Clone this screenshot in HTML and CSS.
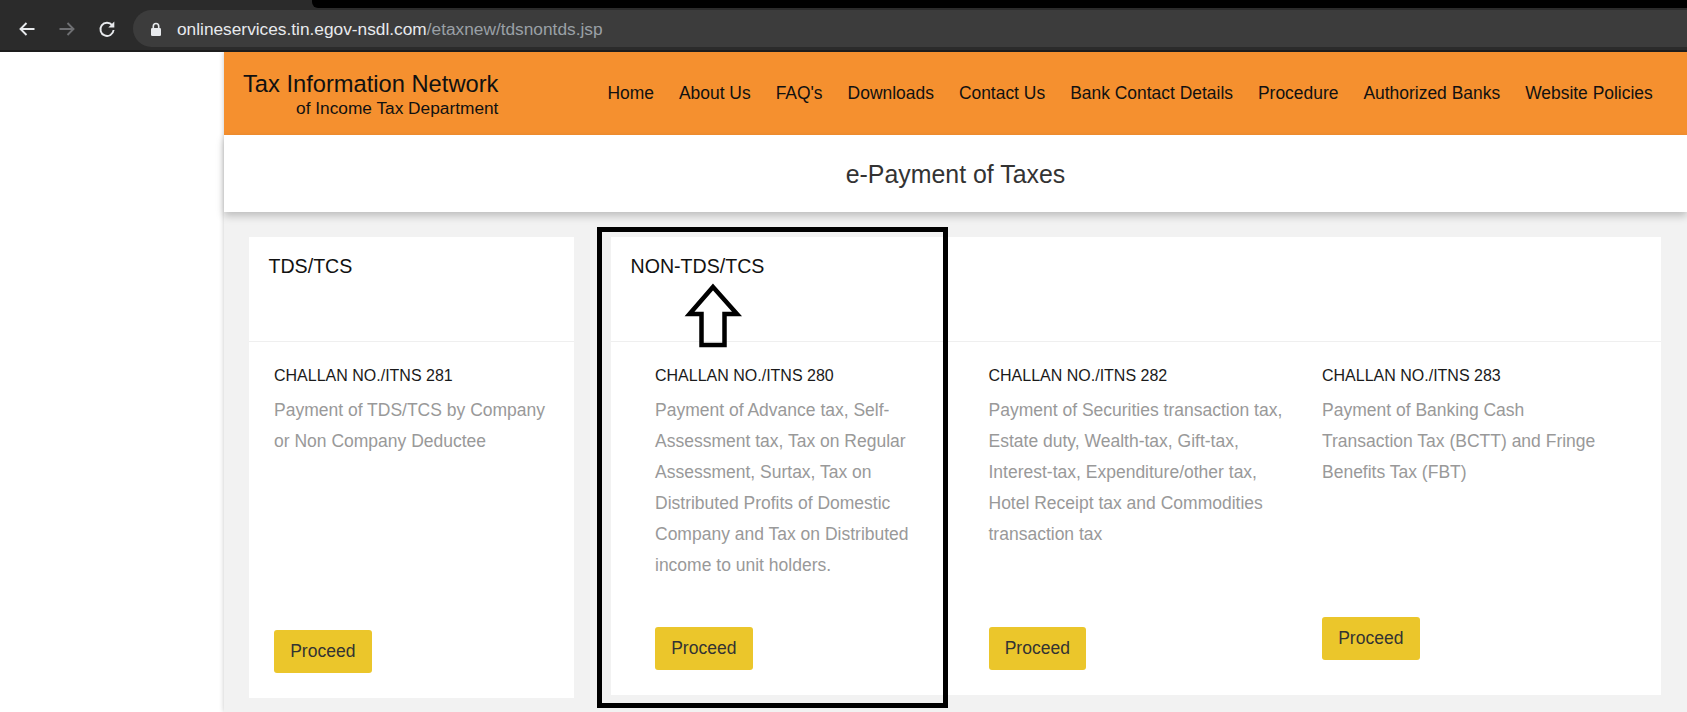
FILE: index.html
```html
<!DOCTYPE html>
<html lang="en">
<head>
<meta charset="utf-8">
<title>e-Payment of Taxes</title>
<link rel="stylesheet" href="styles.css">
</head>
<body>
<div class="browser">
  <div class="tabstrip"><div class="tab"></div><div class="tab-rest"></div></div>
  <div class="toolbar">
    <svg class="tool-icon" width="18" height="18" viewBox="0 0 18 18"><path d="M16.5 9H2.5M8.5 3L2.5 9l6 6" stroke="#e8eaed" stroke-width="1.9" fill="none"/></svg>
    <svg class="tool-icon" width="18" height="18" viewBox="0 0 18 18"><path d="M1.5 9h14M9.5 3l6 6-6 6" stroke="#6e6f72" stroke-width="1.9" fill="none"/></svg>
    <svg class="tool-icon" width="18" height="18" viewBox="0 0 18 18"><path d="M14.2 5.2A6.6 6.6 0 1 0 15.6 10" stroke="#e8eaed" stroke-width="1.9" fill="none"/><path d="M16.3 1.6v6h-6z" fill="#e8eaed"/></svg>
    <div class="omnibox">
      <svg class="lock" width="10" height="14" viewBox="0 0 10 14"><path d="M2.3 6.2V4.2a2.7 2.7 0 0 1 5.4 0v2" stroke="#e8eaed" stroke-width="1.6" fill="none"/><rect x="0" y="6" width="10" height="8" rx="1.3" fill="#e8eaed"/></svg>
      <span class="url"><span class="url-host">onlineservices.tin.egov-nsdl.com</span><span class="url-path">/etaxnew/tdsnontds.jsp</span></span>
    </div>
  </div>
</div>

<div class="page">
  <div class="gutter"></div>
  <div class="site">
    <header class="site-header">
      <div class="brand">
        <div class="brand-title">Tax Information Network</div>
        <div class="brand-sub">of Income Tax Department</div>
      </div>
      <nav class="main-nav">
        <a href="#">Home</a>
        <a href="#">About Us</a>
        <a href="#">FAQ's</a>
        <a href="#">Downloads</a>
        <a href="#">Contact Us</a>
        <a href="#">Bank Contact Details</a>
        <a href="#">Procedure</a>
        <a href="#">Authorized Banks</a>
        <a href="#">Website Policies</a>
      </nav>
    </header>

    <div class="title-band"><h1 class="page-title">e-Payment of Taxes</h1></div>

    <main class="content">
      <section class="card card-tds">
        <div class="card-head">TDS/TCS</div>
        <div class="card-body card-body-tds">
          <div class="challan">
            <div class="challan-no">CHALLAN NO./ITNS 281</div>
            <p class="challan-desc">Payment of TDS/TCS by Company or Non Company Deductee</p>
            <a href="#" class="btn btn-tds">Proceed</a>
          </div>
        </div>
      </section>

      <section class="card card-nontds">
        <div class="card-head">NON-TDS/TCS</div>
        <div class="card-body card-body-grid">
          <div class="challan challan-col">
            <div class="challan-no">CHALLAN NO./ITNS 280</div>
            <p class="challan-desc">Payment of Advance tax, Self-Assessment tax, Tax on Regular Assessment, Surtax, Tax on Distributed Profits of Domestic Company and Tax on Distributed income to unit holders.</p>
            <a href="#" class="btn">Proceed</a>
          </div>
          <div class="challan challan-col">
            <div class="challan-no">CHALLAN NO./ITNS 282</div>
            <p class="challan-desc">Payment of Securities transaction tax, Estate duty, Wealth-tax, Gift-tax, Interest-tax, Expenditure/other tax, Hotel Receipt tax and Commodities transaction tax</p>
            <a href="#" class="btn">Proceed</a>
          </div>
          <div class="challan challan-col">
            <div class="challan-no">CHALLAN NO./ITNS 283</div>
            <p class="challan-desc">Payment of Banking Cash Transaction Tax (BCTT) and Fringe Benefits Tax (FBT)</p>
            <a href="#" class="btn btn-short">Proceed</a>
          </div>
        </div>
      </section>
    </main>
  </div>
</div>

<div class="annotation-box"></div>
<svg class="annotation-arrow" width="60" height="74" viewBox="0 0 60 74"><path d="M29 9L53 36H40.5V67H17.5V36H5.5Z" fill="none" stroke="#000" stroke-width="4.5" stroke-linejoin="miter"/></svg>
</body>
</html>
```

FILE: styles.css
```css
* { box-sizing: border-box; }

html, body {
  margin: 0;
  padding: 0;
}

body {
  position: relative;
  width: 1687px;
  height: 712px;
  overflow: hidden;
  background: #ffffff;
  font-family: "Liberation Sans", Arial, sans-serif;
}

/* ---------- browser chrome ---------- */
.browser {
  position: relative;
  z-index: 3;
  height: 52px;
  background: #2b2b2b;
  border-bottom: 2px solid #1d1d1d;
}

.tabstrip {
  display: flex;
  height: 8px;
}

.tab {
  width: 312px;
  background: #2b2b2b;
}

.tab-rest {
  flex: 1;
  background: #000;
  border-bottom-left-radius: 6px;
}

.toolbar {
  display: flex;
  align-items: center;
  height: 42px;
  padding: 2px 0 3px 18px;
  gap: 22px;
}

.tool-icon {
  display: block;
  flex: none;
}

.omnibox {
  flex: 1;
  display: flex;
  align-items: center;
  height: 37px;
  margin-left: -5px;
  padding-left: 18px;
  background: #3c3c3c;
  border-radius: 19px 0 0 19px;
}

.lock {
  display: block;
  flex: none;
}

.url {
  margin-left: 16px;
  font-size: 17.3px;
  line-height: 20px;
  white-space: nowrap;
}

.url-host { color: #e8eaed; }
.url-path { color: #9aa0a6; }

/* ---------- page ---------- */
.page {
  display: flex;
  height: 660px;
}

.gutter {
  width: 224px;
  flex: none;
  background: #ffffff;
}

.site {
  flex: 1;
  display: flex;
  flex-direction: column;
  box-shadow: 0 0 5px rgba(0, 0, 0, 0.22);
}

.site-header {
  display: flex;
  align-items: flex-start;
  height: 83px;
  background: #f5902f;
  flex: none;
}

.brand {
  margin: 19px 0 0 19px;
  text-align: right;
  color: #111;
}

.brand-title {
  font-size: 23.7px;
  line-height: 26px;
  white-space: nowrap;
}

.brand-sub {
  margin-top: 1px;
  font-size: 17.3px;
  line-height: 20px;
  white-space: nowrap;
}

.main-nav {
  display: flex;
  gap: 25px;
  margin: 31.2px 0 0 109px;
}

.main-nav a {
  color: #111;
  text-decoration: none;
  font-size: 17.45px;
  line-height: 20px;
  white-space: nowrap;
}

.title-band {
  position: relative;
  z-index: 1;
  display: flex;
  align-items: center;
  justify-content: center;
  height: 77px;
  flex: none;
  background: #ffffff;
  box-shadow: 0 4px 8px rgba(0, 0, 0, 0.22);
}

.page-title {
  margin: 0;
  font-size: 24.9px;
  font-weight: normal;
  line-height: 30px;
  color: #333;
}

.content {
  flex: 1;
  display: flex;
  align-items: flex-start;
  gap: 37px;
  padding: 25px 26px 0 25px;
  background: #f2f2f2;
}

.card {
  background: #ffffff;
  flex: none;
}

.card-tds { width: 325px; }
.card-nontds { width: 1050px; }

.card-head {
  height: 105px;
  padding: 18.2px 19.5px 0;
  font-size: 19.6px;
  line-height: 23px;
  color: #111;
  border-bottom: 1px solid #efefef;
}

.card-body {
  padding: 23.15px 20px 25px 25px;
}

.card-body-grid {
  display: grid;
  grid-template-columns: repeat(3, 333.5px);
  padding: 23.15px 0 25px 44px;
}

.challan-col {
  padding-right: 38.5px;
}

.challan-no {
  font-size: 16px;
  line-height: 22px;
  color: #1a1a1a;
  white-space: nowrap;
}

.challan-desc {
  height: 186px;
  margin: 8.25px 0 0;
  font-size: 17.5px;
  line-height: 31px;
  color: #999999;
}

.btn {
  display: inline-block;
  height: 42.7px;
  margin-top: 45.6px;
  padding: 0 16.2px;
  font-size: 17.5px;
  line-height: 42.7px;
  color: #333;
  text-decoration: none;
  background: #ebc62b;
  border-radius: 3px;
}

.btn-tds { margin-top: 48.6px; }
.btn-short { margin-top: 35.6px; }

/* ---------- annotation overlay ---------- */
.annotation-box {
  position: absolute;
  left: 597px;
  top: 227px;
  width: 351px;
  height: 481px;
  border: 5px solid #000;
  z-index: 5;
}

.annotation-arrow {
  position: absolute;
  left: 684px;
  top: 278px;
  z-index: 5;
}
```
